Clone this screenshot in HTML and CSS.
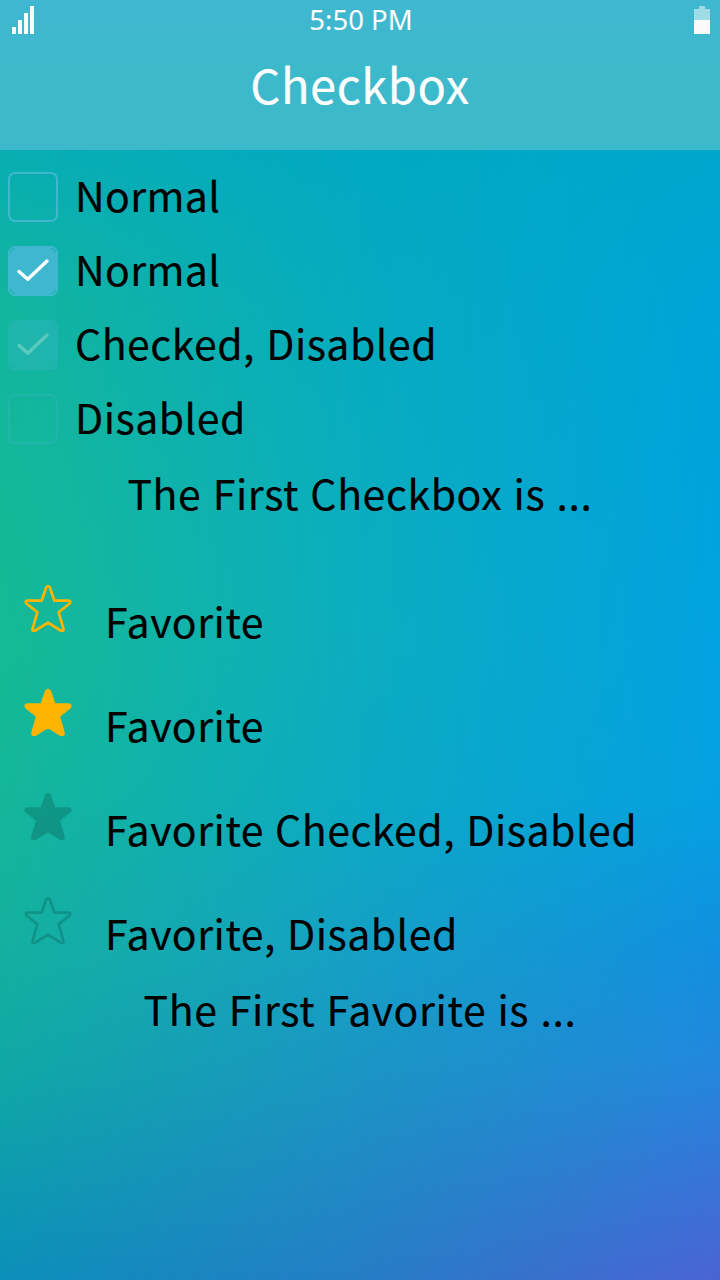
FILE: index.html
```
<!DOCTYPE html>
<html lang="en">
<head>
<meta charset="utf-8">
<title>Checkbox</title>
<link rel="stylesheet" href="styles.css">
</head>
<body>
<svg class="defs" width="0" height="0" aria-hidden="true">
  <symbol id="star" viewBox="0 0 48 48">
    <path d="M24 2 Q25.3 2 25.9 3.7 L30.4 16.7 H44.3 Q46.2 16.7 46.2 18.2 Q46.2 19.1 45 20 L34.6 28.2 L39.4 44.6 Q39.8 46.5 38.6 47 Q37.7 47.3 36.6 46.5 L24 38.6 L11.4 46.5 Q10.3 47.3 9.4 47 Q8.2 46.5 8.6 44.6 L13.4 28.2 L3 20 Q1.8 19.1 1.8 18.2 Q1.8 16.7 3.7 16.7 H17.6 L22.1 3.7 Q22.7 2 24 2 Z"/>
  </symbol>
  <symbol id="check" viewBox="0 0 50 50">
    <rect class="fill" x="2" y="2" width="46" height="46" rx="7"/>
    <path d="M11 25.5 L19.8 33.3 L39 15"/>
  </symbol>
</svg>
<div class="screen">
  <header class="header">
    <div class="status">
      <svg class="signal" width="22" height="28" viewBox="0 0 22 28"><path d="M0 21h4v7H0zM6 14h4v14H6zM12 7h4v21h-4zM18 0h4v28h-4z"/></svg>
      <span class="time">5:50 PM</span>
      <svg class="battery" width="16" height="28" viewBox="0 0 16 28"><path class="empty" d="M5 0h6v3h5v11H0V3h5z"/><path d="M0 14h16v14H0z"/></svg>
    </div>
    <h1 class="title">Checkbox</h1>
  </header>
  <main class="content">
    <div class="row"><span class="box"></span><span class="label tight">Normal</span></div>
    <div class="row"><span class="box checked"><svg><use href="#check"/></svg></span><span class="label tight">Normal</span></div>
    <div class="row"><span class="box checked disabled"><svg><use href="#check"/></svg></span><span class="label">Checked, Disabled</span></div>
    <div class="row"><span class="box disabled"></span><span class="label">Disabled</span></div>
    <p class="message">The First Checkbox is ...</p>
    <div class="favorites">
      <div class="fav"><svg class="star"><use href="#star"/></svg><span class="label">Favorite</span></div>
      <div class="fav"><svg class="star filled"><use href="#star"/></svg><span class="label">Favorite</span></div>
      <div class="fav"><svg class="star filled off"><use href="#star"/></svg><span class="label">Favorite Checked, Disabled</span></div>
      <div class="fav"><svg class="star off"><use href="#star"/></svg><span class="label">Favorite, Disabled</span></div>
    </div>
    <p class="message">The First Favorite is ...</p>
  </main>
</div>
</body>
</html>
```
FILE: styles.css
```
* { box-sizing: border-box; }
body { margin: 0; }
.defs { display: block; position: absolute; }
.screen {
  position: relative;
  isolation: isolate;
  width: 720px;
  height: 1280px;
  overflow: hidden;
  font-family: "Noto Sans CJK JP", "Noto Sans", sans-serif;
  color: #000;
  background: linear-gradient(#08aeb2 150px, #13b59e 300px, #15b899 460px, #16ba94 650px, #15b799 780px, #14b0a0 960px, #10a7a6 1080px, #0b8fba 1280px);
}
.screen::before, .screen::after {
  content: "";
  position: absolute;
  inset: 0;
  z-index: -1;
}
.screen::before {
  background: linear-gradient(#02a9c2 150px, #06abc0 300px, #0aadbf 500px, #0cadc0 640px, #0caac4 800px, #169fc6 960px, #1b94c4 1080px, #267dc6 1280px);
  mask-image: linear-gradient(to right, transparent, #000 50%);
}
.screen::after {
  background: linear-gradient(#00a6cc 150px, #00a4d8 300px, #00a3dc 450px, #02a2e1 650px, #05a0e1 800px, #128fdf 950px, #2288dd 1060px, #3378d9 1150px, #4b63d4 1280px);
  mask-image: linear-gradient(to right, transparent 50%, #000);
}
.header {
  height: 150px;
  background: linear-gradient(#40b7d0, #3db9cc 60px);
  color: #fff;
}
.status {
  display: grid;
  grid-template-columns: 1fr auto 1fr;
  height: 40px;
  padding: 0 10px 0 12px;
}
.status svg { display: block; margin-top: 6px; fill: #fafafa; }
.battery { justify-self: end; }
.battery .empty { fill: #a0dce6; }
.time { margin-top: 1px; font-family: "Noto Sans", sans-serif; font-size: 27.5px; line-height: 38px; }
.title {
  margin: 0;
  padding-top: 8px;
  font-size: 47px;
  line-height: 72px;
  font-weight: 400;
  letter-spacing: .6px;
  text-align: center;
  -webkit-text-stroke: .2px;
}
.content { padding-top: 11px; }
.row { display: flex; align-items: center; height: 74px; padding-left: 8px; gap: 18px; }
.row:first-child { margin-top: -1px; }
.label, .message { font-size: 41px; line-height: 60px; letter-spacing: .5px; white-space: pre; -webkit-text-stroke: .2px; }
.label { word-spacing: 1.5px; }
.row .label { margin: -6px 0 0 -1px; }
.row .tight { letter-spacing: .35px; }
.box { width: 50px; height: 50px; border: 2px solid #3fb7ce; border-radius: 7px; }
.box svg { display: block; width: 50px; height: 50px; margin: -2px; fill: none; stroke: #fff; stroke-width: 3.4; stroke-linecap: round; stroke-linejoin: round; }
.fill { fill: #3fb7ce; stroke: none; }
.disabled { opacity: .3; }
.message { margin: 0; height: 76px; padding-top: 6px; text-align: center; letter-spacing: .6px; word-spacing: 1.5px; }
.favorites { display: flex; flex-direction: column; gap: 26px; padding-top: 50px; }
.fav { display: flex; height: 78px; padding-left: 24px; gap: 33px; }
.fav .label { margin-top: 8px; }
.star { width: 48px; height: 48px; margin-top: 2px; fill: none; stroke: #ffb400; stroke-width: 2.7; stroke-linejoin: round; }
.filled { fill: #ffb400; }
.off { stroke: #000; opacity: .16; }
.filled.off { fill: #000; }
```
